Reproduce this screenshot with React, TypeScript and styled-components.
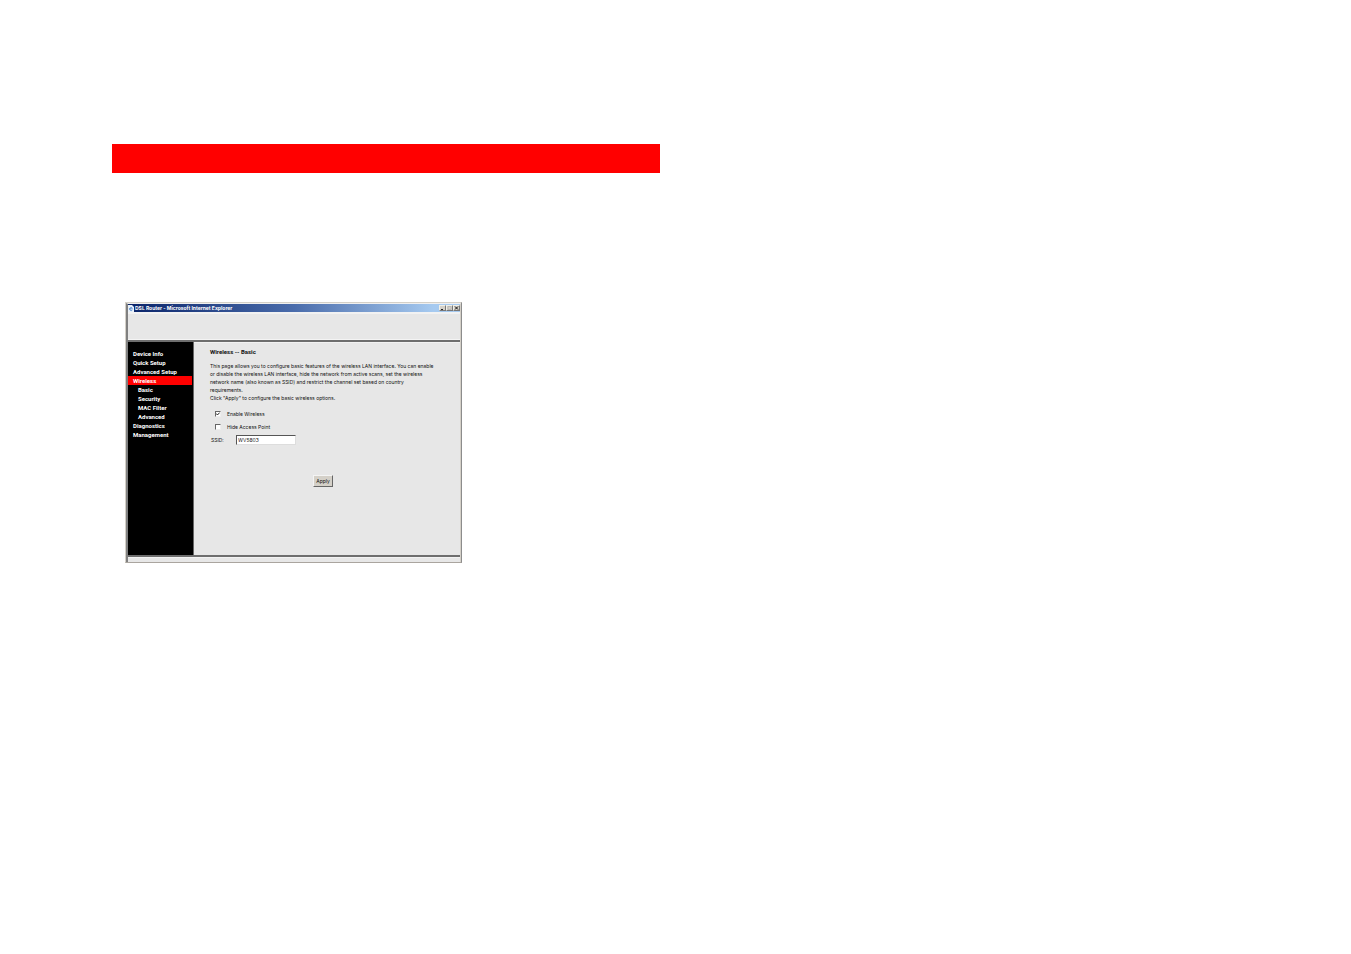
import React from 'react';
import styled, { createGlobalStyle } from 'styled-components';

const Global = createGlobalStyle`
  * { box-sizing: border-box; }
  body { margin: 0; background: #fff; }
`;

const Page = styled.div`
  min-height: 100vh;
  padding: 144px 112px 64px;
  font-family: Inter, 'Liberation Sans', sans-serif;
  font-size: 5px;
  color: #111;
`;

const Banner = styled.div`
  max-width: 548px;
  height: 29px;
  background: #f00;
`;

const Browser = styled.main`
  max-width: 337px;
  margin: 129px 0 0 13px;
  background: #e7e7e7;
  border: 1px solid #d4d0c8;
  border-right: 1px solid #8c8c8c;
  border-bottom-color: #aaa59f;
`;

const Frame = styled.div`
  border-top: 1px solid #efefef;
  border-left: 2px solid #808080;
  border-right: 1px solid #d4d0c8;
`;

const TitleBar = styled.header`
  display: flex;
  align-items: center;
  height: 8px;
  gap: 1px;
  background: linear-gradient(to right, #0a246a, #4a6cab 50%, #a6caf0 92%);
`;

const Title = styled.span`
  flex: 1;
  color: #fff;
  font-weight: bold;
  line-height: 8px;
  white-space: nowrap;
`;

const PageIcon = styled.svg`
  width: 6px;
  height: 7px;
`;

const WindowButtons = styled.div`
  display: flex;
`;

const WindowButton = styled.button`
  display: flex;
  width: 7px;
  height: 6px;
  padding: 0;
  background: #d4d0c8;
  border: 1px solid #efefe8;
  border-right-color: #777;
  border-bottom-color: #777;
  svg { width: 5px; height: 4px; }
`;

const TopPanel = styled.div`
  height: 28px;
  border-top: 2px solid #f2f2f2;
  border-bottom: 1px solid #f4f4f4;
`;

const Columns = styled.div`
  display: flex;
  min-height: 217px;
  border-top: 2px solid #6e6e6e;
  border-bottom: 2px solid #6e6e6e;
`;

const Sidebar = styled.nav`
  flex: none;
  width: 66px;
  padding: 7px 1px 0 0;
  background: #000;
  border-right: 1px solid #666;
`;

const MenuLink = styled.a<{ $sub?: boolean; $active?: boolean }>`
  display: block;
  padding-left: ${(p) => (p.$sub ? 10 : 5)}px;
  background: ${(p) => (p.$active ? '#f00' : 'transparent')};
  color: #fff;
  font-family: Roboto, sans-serif;
  font-size: 6px;
  font-weight: bold;
  line-height: 9px;
  text-decoration: none;
  white-space: nowrap;
`;

const Content = styled.section`
  flex: 1;
  padding: 5px 24px 0 16px;
  border-top: 1px solid #f2f2f2;
`;

const Heading = styled.h1`
  margin: 0 0 6px;
  font-family: Roboto, sans-serif;
  font-size: 6px;
  line-height: 8px;
`;

const Intro = styled.p`
  margin: 0;
  line-height: 8px;
  white-space: nowrap;
`;

const Options = styled.form`
  display: flex;
  flex-direction: column;
  margin-top: 5px;
`;

const CheckRow = styled.label`
  display: flex;
  align-items: center;
  gap: 6px;
  height: 13px;
  padding-left: 5px;
`;

const Check = styled.input`
  appearance: none;
  width: 6px;
  height: 6px;
  margin: 0;
  background: #fff;
  border: 1px solid #eee;
  border-top-color: #666;
  border-left-color: #666;
  &:checked {
    background: #fff url("data:image/svg+xml,%3Csvg xmlns='http://www.w3.org/2000/svg' viewBox='0 0 4 4'%3E%3Cpath d='M.4 1.6 1.4 3 3.7.6' fill='none' stroke='%23222'/%3E%3C/svg%3E");
  }
`;

const Field = styled.label`
  display: flex;
  align-items: center;
  height: 13px;
  padding-left: 1px;
`;

const FieldName = styled.span`
  width: 25px;
`;

const TextBox = styled.input`
  width: 60px;
  height: 10px;
  padding: 0 1px;
  background: #fff;
  border: 1px solid #ddd;
  border-top-color: #555;
  border-left-color: #555;
  color: #222;
  font: inherit;
`;

const Apply = styled.button`
  align-self: center;
  width: 20px;
  height: 12px;
  margin: 29px 0 0;
  padding: 0;
  background: #d4d0c8;
  border: 1px solid #f4f4f4;
  border-right-color: #666;
  border-bottom-color: #666;
  color: #111;
  font: inherit;
`;

const StatusBar = styled.footer`
  height: 5px;
  border-top: 1px solid #f2f2f2;
`;

const menu = [
  { label: 'Device Info' },
  { label: 'Quick Setup' },
  { label: 'Advanced Setup' },
  { label: 'Wireless', active: true },
  { label: 'Basic', sub: true },
  { label: 'Security', sub: true },
  { label: 'MAC Filter', sub: true },
  { label: 'Advanced', sub: true },
  { label: 'Diagnostics' },
  { label: 'Management' },
];

export default function App() {
  return (
    <Page>
      <Global />
      <Banner />
      <Browser>
        <Frame>
          <TitleBar>
            <PageIcon viewBox="0 0 6 7">
              <path d="M0 0h4l2 2v5H0z" fill="#e8f1fa" />
              <path d="M4.4 3.2A1.5 1.5 0 1 0 4.3 5M1.6 3.8h2.8" fill="none" stroke="#3c78c8" strokeWidth=".8" />
            </PageIcon>
            <Title>DSL Router - Microsoft Internet Explorer</Title>
            <WindowButtons>
              <WindowButton aria-label="Minimize">
                <svg viewBox="0 0 5 4"><path d="M1 3h2v1H1z" fill="#222" /></svg>
              </WindowButton>
              <WindowButton aria-label="Maximize">
                <svg viewBox="0 0 5 4"><path d="M1 .5h3v3H1z" fill="none" stroke="#aaa" strokeWidth=".6" /></svg>
              </WindowButton>
              <WindowButton aria-label="Close">
                <svg viewBox="0 0 5 4"><path d="m1 .5 3 3m0-3-3 3" stroke="#111" /></svg>
              </WindowButton>
            </WindowButtons>
          </TitleBar>
          <TopPanel />
          <Columns>
            <Sidebar>
              {menu.map((m) => (
                <MenuLink key={m.label} href="#" $sub={m.sub} $active={m.active}>
                  {m.label}
                </MenuLink>
              ))}
            </Sidebar>
            <Content>
              <Heading>Wireless -- Basic</Heading>
              <Intro>
                This page allows you to configure basic features of the wireless LAN interface. You can enable
                <br />
                or disable the wireless LAN interface, hide the network from active scans, set the wireless
                <br />
                network name (also known as SSID) and restrict the channel set based on country
                <br />
                requirements.
                <br />
                Click "Apply" to configure the basic wireless options.
              </Intro>
              <Options onSubmit={(e) => e.preventDefault()}>
                <CheckRow>
                  <Check type="checkbox" defaultChecked />
                  Enable Wireless
                </CheckRow>
                <CheckRow>
                  <Check type="checkbox" />
                  Hide Access Point
                </CheckRow>
                <Field>
                  <FieldName>SSID:</FieldName>
                  <TextBox defaultValue="WV5803" />
                </Field>
                <Apply type="submit">Apply</Apply>
              </Options>
            </Content>
          </Columns>
          <StatusBar />
        </Frame>
      </Browser>
    </Page>
  );
}
